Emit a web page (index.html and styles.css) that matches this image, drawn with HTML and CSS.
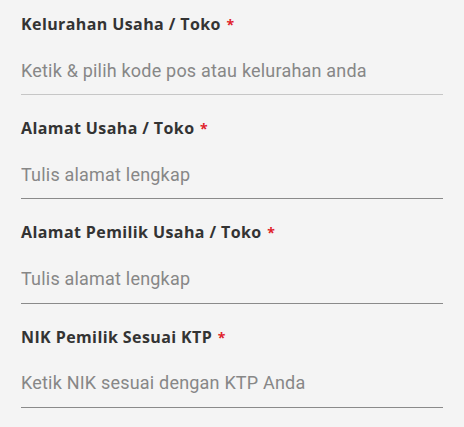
FILE: index.html
```html
<!DOCTYPE html>
<html lang="id">
<head>
    <meta charset="UTF-8">
    <meta name="viewport" content="width=device-width, initial-scale=1.0">
    <title>Data Usaha</title>
    <link rel="stylesheet" href="styles.css">
</head>
<body>
    <form class="form">
        <div class="field">
            <label class="field-label">Kelurahan Usaha / Toko <span class="req">*</span></label>
            <input class="field-input field-input-light" type="text" placeholder="Ketik &amp; pilih kode pos atau kelurahan anda">
        </div>
        <div class="field">
            <label class="field-label">Alamat Usaha / Toko <span class="req">*</span></label>
            <input class="field-input" type="text" placeholder="Tulis alamat lengkap">
        </div>
        <div class="field">
            <label class="field-label">Alamat Pemilik Usaha / Toko <span class="req">*</span></label>
            <input class="field-input" type="text" placeholder="Tulis alamat lengkap">
        </div>
        <div class="field">
            <label class="field-label">NIK Pemilik Sesuai KTP <span class="req">*</span></label>
            <input class="field-input" type="text" placeholder="Ketik NIK sesuai dengan KTP Anda">
        </div>
    </form>
</body>
</html>
```

FILE: styles.css
```css
body {
    margin: 0;
    background-color: #f4f4f4;
    font-family: "Open Sans", sans-serif;
}
.form {
    padding: 0 21px;
}
.field {
    display: flex;
    flex-direction: column;
    padding-top: 14px;
    margin-bottom: 8.9px;
}
.field-label {
    font-size: 16px;
    line-height: 20px;
    font-weight: bold;
    letter-spacing: 0.4px;
    color: #333;
}
.req {
    color: #e0222b;
    font-size: 14px;
    line-height: 0;
    margin-left: 1px;
}
.field-input {
    box-sizing: border-box;
    font-family: Roboto, sans-serif;
    font-size: 18px;
    line-height: 24px;
    letter-spacing: 0.2px;
    height: 37px;
    margin-top: 24.3px;
    padding: 0 0 12px;
    border: none;
    border-bottom: 1px solid #8a8a8a;
    background: transparent;
    color: #333;
    outline: none;
}
.field-input-light {
    border-bottom-color: #c6c6c6;
}
.field-input::placeholder {
    color: #878787;
}
```
